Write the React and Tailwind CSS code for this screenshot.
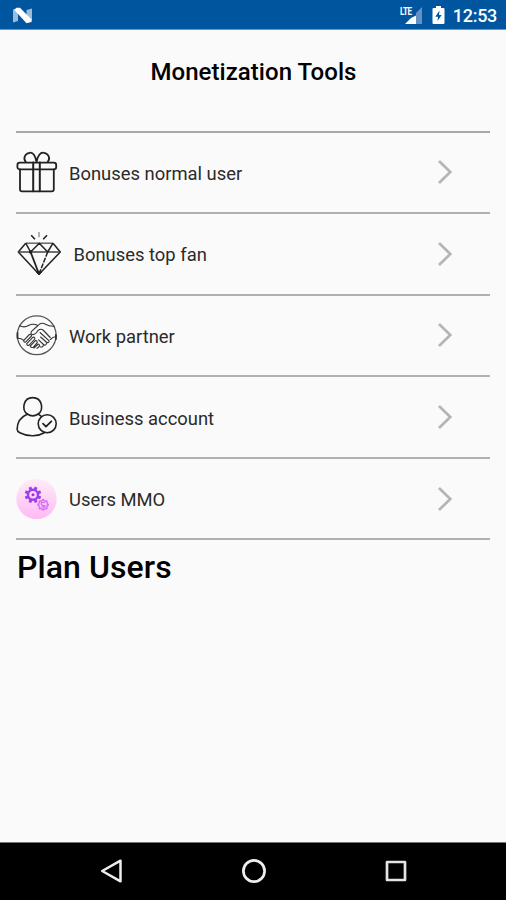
const GiftIcon = () => (
  <svg viewBox="0 0 48 44" className="h-11 w-12" fill="none" stroke="#222" strokeWidth="1.8" strokeLinejoin="round" strokeLinecap="round">
    <rect x="1.4" y="12.6" width="38.8" height="6.8" rx="2.4" />
    <path d="M4 19.5V39.3Q4 41.4 6 41.4H35.8Q37.8 41.4 37.8 39.3V19.5" />
    <path d="M17.2 12.6V41.2M23.8 12.6V41.2" strokeWidth="2" />
    <path d="M20.5 12C19.5 6 17 1.8 13.5 2.8C8.5 3.8 7 8.5 9.8 12M20.5 12C21.5 6 24.5 1.8 28 2.8C33 3.8 34.5 8.5 31.7 12" />
  </svg>
)

const DiamondIcon = () => (
  <svg viewBox="0 0 48 44" className="h-11 w-12" fill="none" stroke="#222" strokeWidth="1.5" strokeLinejoin="round">
    <path d="M9.7 11.2L2.3 20L23 42.3L44.3 20L37 11.2" />
    <path d="M9.7 11.2H37" stroke="#666" />
    <path d="M2.3 20H44.3" stroke="#444" />
    <path d="M9.7 11.2L14.6 20L23.3 11.2L31.7 20L37 11.2" />
    <path d="M14.6 20L23 42" strokeWidth="1.8" />
    <path d="M31.7 20L23 42" strokeDasharray="5 1.2" />
    <path d="M15.2 3.3L19 7.3M31 3.3L27.2 7.3" strokeWidth="1.6" />
    <path d="M23 0V5.3" stroke="#999" />
    <circle cx="14.6" cy="20" r="1" fill="#222" />
    <path d="M20.7 40L23 42.3L25.3 40Z" fill="#222" />
  </svg>
)

const HandshakeIcon = () => (
  <svg viewBox="0 0 48 44" className="h-11 w-12" fill="none" stroke="#333" strokeWidth="1.1" strokeLinejoin="round" strokeLinecap="round">
    <circle cx="20.7" cy="22.3" r="19.4" stroke="#555" strokeWidth="1.3" />
    <path d="M3.5 12.8Q8.5 15 12.5 12.5Q16 10.5 19.5 11.6L22 12.5M38.2 13.2Q33 13.4 29.5 11.3Q25.5 8.7 22 12.5L15.5 18.3Q14 21.3 17 21.6Q19.2 21.6 22 17.5Q25 15 27.5 17.5L34.2 24.5" />
    <path d="M1.5 25.2Q5 25 7.8 27.3M40 23.5Q37 23.8 34.3 26.5" />
    <path d="M7.8 27.3L13.4 21.5Q15.5 20.7 15.5 23L9.6 29.2Q7.5 29.5 7.8 27.3M10.6 30.8L17 24.2Q19 23.7 18.8 26L13.2 32.2Q10.8 32.8 10.6 30.8M14.3 33.2L19.3 27.6Q21.5 27.4 21.2 29.7L17.3 34.3Q15 35.1 14.3 33.2M18 35L22.2 31Q24 31.5 23.2 33.5L21 35.4" />
    <path d="M24 19.5L33.2 27.8Q33 30.2 30.8 29.5L24.6 24M30.5 30Q30.2 32.7 28 32L22.6 26.8M27.3 32.5Q26.5 34.7 24.2 33.8" />
    <path d="M1.5 20V25M39.9 22V26" strokeWidth="1.8" />
  </svg>
)

const AccountIcon = () => (
  <svg viewBox="0 0 48 44" className="h-11 w-12" fill="none" stroke="#222" strokeWidth="1.6" strokeLinecap="round" strokeLinejoin="round">
    <path d="M11.2 19C5.5 15 7 2.6 16.7 2.6S28 15 22.2 19Q16.7 22.8 11.2 19Z" />
    <path d="M11.2 19.2C4.5 22 1.3 27 1.1 34.3Q1.2 36.6 3.8 37.8Q10 41 17 40.8Q23 40.8 28.2 37.7M22.2 19.2L25.4 21.3" />
    <circle cx="31.2" cy="28.8" r="9" />
    <path d="M27 28.7L30 31.6L35.3 26.3" strokeWidth="1.8" />
  </svg>
)

const teeth = [0, 45, 90, 135, 180, 225, 270, 315]

const GearsIcon = () => (
  <svg viewBox="0 0 48 44" className="h-11 w-12" fill="none">
    <defs>
      <linearGradient id="pinkDisc" x1="0" y1="0" x2="0" y2="1">
        <stop offset="0" stopColor="#fdecfa" />
        <stop offset=".55" stopColor="#fdd2f6" />
        <stop offset="1" stopColor="#ffb8f5" />
      </linearGradient>
    </defs>
    <circle cx="20.5" cy="21.9" r="20.2" fill="url(#pinkDisc)" />
    <circle cx="17" cy="17.8" r="5" stroke="#a03ee8" strokeWidth="2.4" />
    <circle cx="17" cy="17.8" r="1.5" fill="#9d2ee8" />
    {teeth.map((a) => (
      <path key={a} d="M17 9.5V12.5" stroke="#a03ee8" strokeWidth="3" transform={`rotate(${a + 22.5} 17 17.8)`} />
    ))}
    <circle cx="27.1" cy="27.8" r="4.4" stroke="#d873f3" strokeWidth="1.6" />
    <path d="M29 25.7Q25.2 24.5 25.2 26.5T29 28.9Q29 31 25.2 29.8" stroke="#cc65f0" strokeWidth="1.2" />
    {teeth.map((a) => (
      <path key={a} d="M27.1 21.9V23.7" stroke="#d873f3" strokeWidth="2" transform={`rotate(${a} 27.1 27.8)`} />
    ))}
  </svg>
)

const items = [
  { label: 'Bonuses normal user', icon: GiftIcon, gap: 'ml-[5px]' },
  { label: 'Bonuses top fan', icon: DiamondIcon, gap: 'ml-[9.5px]' },
  { label: 'Work partner', icon: HandshakeIcon, gap: 'ml-[5px]' },
  { label: 'Business account', icon: AccountIcon, gap: 'ml-[5px]' },
  { label: 'Users MMO', icon: GearsIcon, gap: 'ml-[5px]' },
]

function StatusBar() {
  return (
    <header className="flex h-[30px] items-center border-b border-[#7791b8] bg-[#00559f] pl-3 pr-[9px] text-white">
      <svg viewBox="0 0 22 18" className="mt-0.5 h-[18px] w-[22px]">
        <path d="M1 2.5L6 1.5V14L1 15.5ZM14.5 3L20 1.5V15L14.5 16Z" fill="#9bbbd9" />
        <path d="M2.2 2.8L4.5 .8H8L19.6 12.5L18.5 15L14.5 16.2Z" fill="#fff" />
      </svg>
      <div className="ml-auto flex items-center">
        <div className="flex h-5 w-[22px] items-start">
          <span className="w-[14px] origin-left scale-x-[.9] scale-y-[1.2] text-[9px] font-bold leading-[12px] tracking-[-0.6px]">LTE</span>
          <svg viewBox="0 0 18 18" className="-ml-[10px] mt-[2px] h-[18px] w-[18px] shrink-0">
            <path d="M18 0V17H12V6Z" fill="#6690bd" />
            <path d="M1 17L7 11L12 8.5V17Z" fill="#fff" />
          </svg>
        </div>
        <svg viewBox="0 0 13 20" className="ml-[10px] h-5 w-[13px]">
          <path d="M4 1H9V3H11.5Q12.5 3 12.5 4V18Q12.5 19 11.5 19H1.5Q.5 19 .5 18V4Q.5 3 1.5 3H4Z" fill="#fff" />
          <path d="M7.5 5.5L3.3 11.7H6L5.5 16L9.7 10H7Z" fill="#00559f" />
        </svg>
        <time className="ml-[8px] mt-[3px] text-[18px] font-medium leading-5 tracking-[-0.3px]">12:53</time>
      </div>
    </header>
  )
}

function NavBar() {
  return (
    <nav className="flex h-[58px] items-center justify-between border-t border-[#777] bg-black pb-[1px] pl-[100px] pr-[98px]">
      <svg viewBox="0 0 24 24" className="h-6 w-6" fill="none" stroke="#eee" strokeWidth="2.5" strokeLinejoin="round">
        <path d="M2.2 12L20.5 1.7V22.3Z" />
      </svg>
      <svg viewBox="0 0 26 26" className="h-[26px] w-[26px]" fill="none" stroke="#eee" strokeWidth="2.7">
        <circle cx="13" cy="13" r="10.6" />
      </svg>
      <svg viewBox="0 0 24 24" className="h-6 w-6" fill="none" stroke="#e4e4e4" strokeWidth="2.7" strokeLinejoin="round">
        <rect x="3" y="3" width="18" height="18" />
      </svg>
    </nav>
  )
}

export default function App() {
  return (
    <div className="flex h-[900px] w-[506px] flex-col overflow-hidden bg-[#fafafa] font-['Roboto',sans-serif] text-black">
      <StatusBar />
      <main className="flex-1 px-4">
        <h1 className="ml-[1px] pt-[26px] text-center text-[24px] font-medium leading-8 tracking-[0.05px]">Monetization Tools</h1>
        <ul className="mt-[42.5px] border-t-2 border-[#a8a8a8]">
          {items.map(({ label, icon: Icon, gap }) => (
            <li key={label} className="flex h-[81.6px] items-center border-b-2 border-[#b0b0b0]">
              <Icon />
              <span className={`${gap} mt-[3px] whitespace-nowrap text-[18.4px] leading-6 text-[#2a2a2a]`}>{label}</span>
              <svg viewBox="0 0 18 28" className="ml-auto mr-[35px] h-7 w-[18px]" fill="none" stroke="#b5b5b5" strokeWidth="2.7">
                <path d="M2 3L13.3 14L2 25" />
              </svg>
            </li>
          ))}
        </ul>
        <h2 className="ml-[1px] mt-[6.5px] text-[32px] font-medium leading-10 tracking-[0.08px]">Plan Users</h2>
      </main>
      <NavBar />
    </div>
  )
}
